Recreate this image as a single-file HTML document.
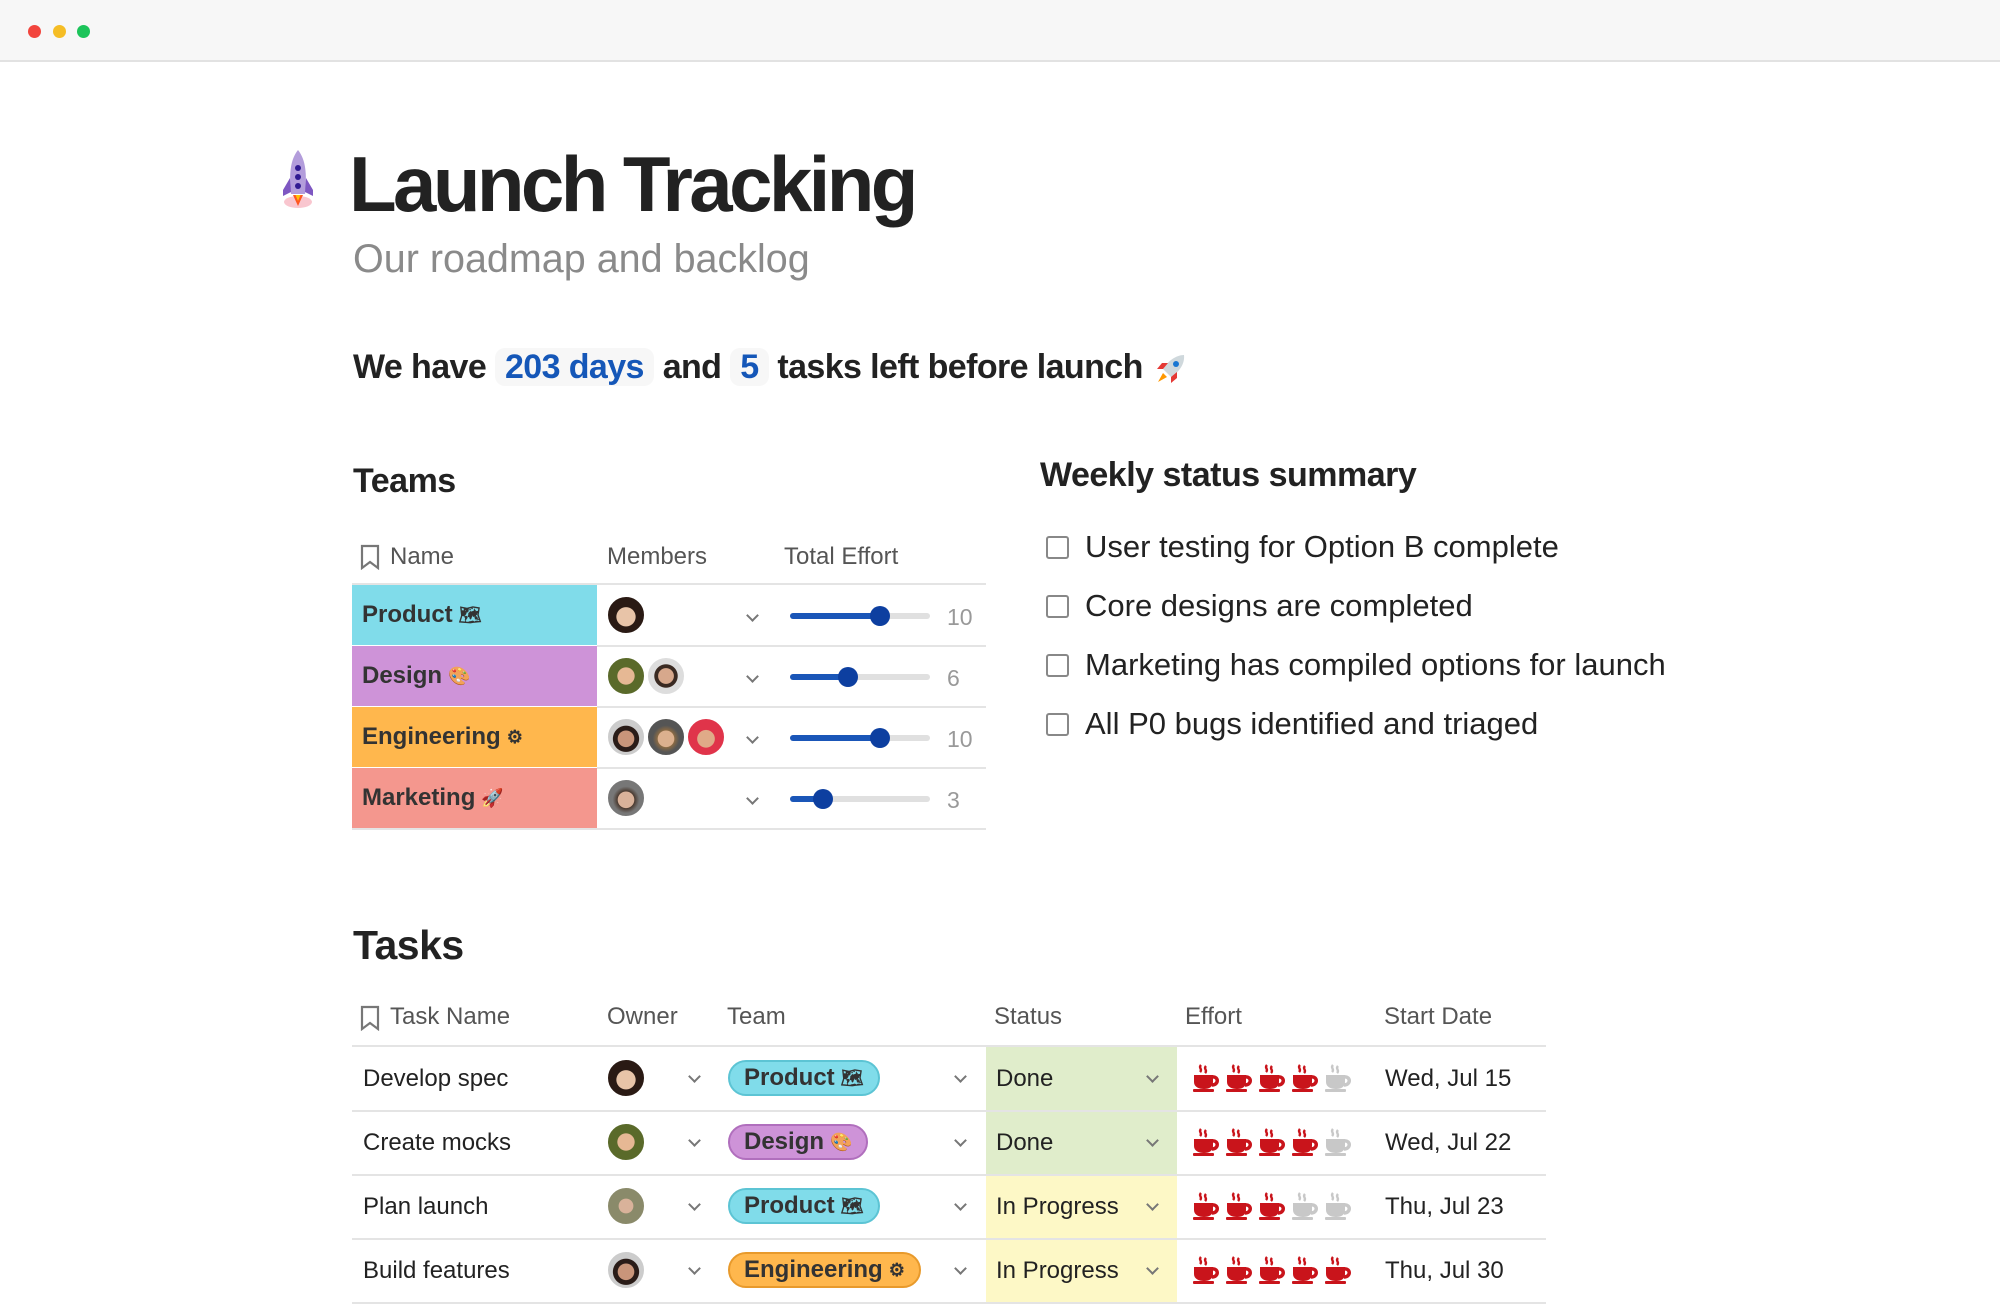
<!DOCTYPE html>
<html><head><meta charset="utf-8"><style>
*{margin:0;padding:0;box-sizing:border-box}
body{width:2000px;height:1304px;overflow:hidden;background:#fff;font-family:"Liberation Sans",sans-serif;color:#222;position:relative}
.a{position:absolute;white-space:nowrap}
.top{position:absolute;left:0;top:0;width:2000px;height:62px;background:#f7f7f7;border-bottom:2px solid #e2e2e2}
.dot{position:absolute;top:25px;width:13px;height:13px;border-radius:50%}
.hdr{font-size:24px;color:#555}
.line{position:absolute;height:2px;background:#e4e4e4}
.cell{position:absolute;font-size:24px;font-weight:bold;color:#333;padding-left:10px;display:flex;align-items:center}
.av{position:absolute;width:40px;height:40px;border-radius:50%;border:2px solid #fff;overflow:hidden}
.chev{position:absolute;width:9px;height:9px;border-right:2px solid #777;border-bottom:2px solid #777;transform:rotate(45deg)}
.track{position:absolute;left:790px;width:140px;height:6px;border-radius:3px;background:#e0e0e0}
.fill{position:absolute;left:0;top:0;height:6px;border-radius:3px;background:#1a56b8}
.thumb{position:absolute;top:-7px;width:20px;height:20px;border-radius:50%;background:#0d3fa0}
.num{position:absolute;left:947px;font-size:23px;color:#999}
.cb{position:absolute;left:1046px;width:23px;height:23px;border:2.5px solid #888;border-radius:3px}
.ck{position:absolute;left:1085px;font-size:31px;color:#222}
.tt{position:absolute;font-size:24px;color:#222}
.pill{position:absolute;height:36px;border-radius:18px;font-size:24px;font-weight:bold;color:#333;padding:0 14px;display:flex;align-items:center}
.st{position:absolute;left:986px;width:191px;height:63px}
</style></head><body>
<div class="top"></div>
<div class="dot" style="left:28px;background:#f2453d"></div>
<div class="dot" style="left:53px;background:#f5bd25"></div>
<div class="dot" style="left:77px;background:#1cc45a"></div>

<svg class="a" style="left:280px;top:150px" width="36" height="60" viewBox="0 0 36 60">
<ellipse cx="18" cy="52" rx="14" ry="6" fill="#f9c6cf"/>
<path d="M18 0 C26 10 27 25 25 44 L11 44 C9 25 10 10 18 0Z" fill="#b39ddb"/>
<path d="M10 28 L3 40 L3 46 L11 42Z M26 28 L33 40 L33 46 L25 42Z" fill="#7e57c2"/>
<circle cx="18" cy="18" r="3" fill="#311b92"/><circle cx="18" cy="27" r="3" fill="#311b92"/><circle cx="18" cy="36" r="3" fill="#311b92"/>
<path d="M13 45 L18 56 L23 45Z" fill="#ff5722"/><path d="M15.5 45 L18 51 L20.5 45Z" fill="#ffc107"/>
</svg>
<div class="a" style="left:349px;top:136px;font-size:78px;font-weight:bold;letter-spacing:-3.6px;color:#222;line-height:96px">Launch Tracking</div>
<div class="a" style="left:353px;top:237px;font-size:39.5px;color:#8a8a8a">Our roadmap and backlog</div>

<div class="a" style="left:353px;top:347px;font-size:34px;font-weight:bold;letter-spacing:-0.6px;color:#222;line-height:40px">We have <span style="background:#f7f7f7;color:#1557b8;border-radius:10px;padding:0 10px">203 days</span> and <span style="background:#f7f7f7;color:#1557b8;border-radius:10px;padding:0 10px">5</span> tasks left before launch</div>
<svg class="a" style="left:1154px;top:352px" width="34" height="34" viewBox="0 0 34 34"><path d="M30 3 C22 3 14 9 9 17 L17 25 C25 20 31 12 30 3Z" fill="#cfd8dc"/><circle cx="22" cy="12" r="3" fill="#1976d2"/><path d="M9 17 L3 17 L8 11 L14 11Z M17 25 L17 31 L23 26 L23 20Z" fill="#e53935"/><path d="M9 21 L4 30 L13 25Z" fill="#ff9800"/></svg>

<div class="a" style="left:353px;top:462px;font-size:34px;font-weight:bold;letter-spacing:-0.5px">Teams</div>
<div class="a" style="left:1040px;top:456px;font-size:34px;font-weight:bold;letter-spacing:-0.5px">Weekly status summary</div>

<svg class="a" style="left:360px;top:544px" width="20" height="26" viewBox="0 0 20 26"><path d="M2 2 H18 V24 L10 18 L2 24Z" fill="none" stroke="#777" stroke-width="2.2"/></svg>
<div class="a hdr" style="left:390px;top:543px">Name</div>
<div class="a hdr" style="left:607px;top:543px">Members</div>
<div class="a hdr" style="left:784px;top:543px">Total Effort</div>
<div class="line" style="left:352px;top:583px;width:634px"></div>

<div class="cell" style="left:352px;top:585px;width:245px;height:60px;background:#80dcea">Product <span style="font-size:18px;margin-left:6px">🗺</span></div>
<div class="cell" style="left:352px;top:646px;width:245px;height:60px;background:#ce93d8">Design <span style="font-size:18px;margin-left:6px">🎨</span></div>
<div class="cell" style="left:352px;top:707px;width:245px;height:60px;background:#ffb74d">Engineering <span style="font-size:18px;margin-left:6px">⚙</span></div>
<div class="cell" style="left:352px;top:768px;width:245px;height:60px;background:#f4978e">Marketing <span style="font-size:18px;margin-left:6px">🚀</span></div>
<div class="line" style="left:597px;top:645px;width:389px"></div>
<div class="line" style="left:597px;top:706px;width:389px"></div>
<div class="line" style="left:597px;top:767px;width:389px"></div>
<div class="line" style="left:352px;top:828px;width:634px"></div>

<div class="av" style="left:606px;top:595px;background:radial-gradient(circle at 50% 55%,#e8c4a8 35%,#2a1a14 37%)"></div>
<div class="av" style="left:606px;top:656px;background:radial-gradient(circle at 50% 50%,#e6b894 33%,#5a6a2a 35%)"></div>
<div class="av" style="left:646px;top:656px;background:radial-gradient(circle at 50% 50%,#d7a88c 30%,#3a2a22 32%,#3a2a22 45%,#ddd 47%)"></div>
<div class="av" style="left:606px;top:717px;background:radial-gradient(circle at 50% 55%,#c9957a 30%,#2a1c18 32%,#2a1c18 48%,#ccc 50%)"></div>
<div class="av" style="left:646px;top:717px;background:radial-gradient(circle at 50% 55%,#dcb08e 30%,#8a6a44 32%,#555 50%)"></div>
<div class="av" style="left:686px;top:717px;background:radial-gradient(circle at 50% 55%,#e0aa88 32%,#e0344a 34%)"></div>
<div class="av" style="left:606px;top:778px;background:radial-gradient(circle at 50% 55%,#d9b29a 30%,#4a3a30 32%,#777 50%)"></div>

<div class="chev" style="left:748px;top:611px"></div>
<div class="chev" style="left:748px;top:672px"></div>
<div class="chev" style="left:748px;top:733px"></div>
<div class="chev" style="left:748px;top:794px"></div>

<div class="track" style="top:613px"><div class="fill" style="width:90px"></div><div class="thumb" style="left:80px"></div></div>
<div class="track" style="top:674px"><div class="fill" style="width:58px"></div><div class="thumb" style="left:48px"></div></div>
<div class="track" style="top:735px"><div class="fill" style="width:90px"></div><div class="thumb" style="left:80px"></div></div>
<div class="track" style="top:796px"><div class="fill" style="width:33px"></div><div class="thumb" style="left:23px"></div></div>
<div class="num" style="top:604px">10</div>
<div class="num" style="top:665px">6</div>
<div class="num" style="top:726px">10</div>
<div class="num" style="top:787px">3</div>

<div class="cb" style="top:536px"></div><div class="ck" style="top:529px">User testing for Option B complete</div>
<div class="cb" style="top:595px"></div><div class="ck" style="top:588px">Core designs are completed</div>
<div class="cb" style="top:654px"></div><div class="ck" style="top:647px">Marketing has compiled options for launch</div>
<div class="cb" style="top:713px"></div><div class="ck" style="top:706px">All P0 bugs identified and triaged</div>

<div class="a" style="left:353px;top:922px;font-size:41px;font-weight:bold;letter-spacing:-0.5px">Tasks</div>
<svg class="a" style="left:360px;top:1005px" width="20" height="26" viewBox="0 0 20 26"><path d="M2 2 H18 V24 L10 18 L2 24Z" fill="none" stroke="#777" stroke-width="2.2"/></svg>
<div class="a hdr" style="left:390px;top:1003px">Task Name</div>
<div class="a hdr" style="left:607px;top:1003px">Owner</div>
<div class="a hdr" style="left:727px;top:1003px">Team</div>
<div class="a hdr" style="left:994px;top:1003px">Status</div>
<div class="a hdr" style="left:1185px;top:1003px">Effort</div>
<div class="a hdr" style="left:1384px;top:1003px">Start Date</div>

<div class="st" style="top:1047px;background:#e0edcb"></div>
<div class="st" style="top:1111px;background:#e0edcb"></div>
<div class="st" style="top:1175px;background:#fdf8c6"></div>
<div class="st" style="top:1239px;background:#fdf8c6"></div>
<div class="line" style="left:352px;top:1045px;width:1194px"></div>
<div class="line" style="left:352px;top:1110px;width:1194px"></div>
<div class="line" style="left:352px;top:1174px;width:1194px"></div>
<div class="line" style="left:352px;top:1238px;width:1194px"></div>
<div class="line" style="left:352px;top:1302px;width:1194px"></div>

<div class="tt" style="left:363px;top:1065px">Develop spec</div>
<div class="tt" style="left:363px;top:1129px">Create mocks</div>
<div class="tt" style="left:363px;top:1193px">Plan launch</div>
<div class="tt" style="left:363px;top:1257px">Build features</div>

<div class="av" style="left:606px;top:1058px;background:radial-gradient(circle at 50% 55%,#e8c4a8 35%,#2a1a14 37%)"></div>
<div class="av" style="left:606px;top:1122px;background:radial-gradient(circle at 50% 50%,#e6b894 33%,#5a6a2a 35%)"></div>
<div class="av" style="left:606px;top:1186px;background:radial-gradient(circle at 50% 50%,#d9b29a 28%,#8a8a6a 30%)"></div>
<div class="av" style="left:606px;top:1250px;background:radial-gradient(circle at 50% 55%,#c9957a 30%,#2a1c18 32%,#2a1c18 48%,#ccc 50%)"></div>

<div class="chev" style="left:690px;top:1072px"></div>
<div class="chev" style="left:690px;top:1136px"></div>
<div class="chev" style="left:690px;top:1200px"></div>
<div class="chev" style="left:690px;top:1264px"></div>
<div class="chev" style="left:956px;top:1072px"></div>
<div class="chev" style="left:956px;top:1136px"></div>
<div class="chev" style="left:956px;top:1200px"></div>
<div class="chev" style="left:956px;top:1264px"></div>
<div class="chev" style="left:1148px;top:1072px"></div>
<div class="chev" style="left:1148px;top:1136px"></div>
<div class="chev" style="left:1148px;top:1200px"></div>
<div class="chev" style="left:1148px;top:1264px"></div>

<div class="pill" style="left:728px;top:1060px;background:#80dcea;border:2px solid #5cc4d4">Product <span style="font-size:18px;margin-left:6px">🗺</span></div>
<div class="pill" style="left:728px;top:1124px;background:#ce93d8;border:2px solid #b06fbd">Design <span style="font-size:18px;margin-left:6px">🎨</span></div>
<div class="pill" style="left:728px;top:1188px;background:#80dcea;border:2px solid #5cc4d4">Product <span style="font-size:18px;margin-left:6px">🗺</span></div>
<div class="pill" style="left:728px;top:1252px;background:#ffb74d;border:2px solid #e89a2c">Engineering <span style="font-size:18px;margin-left:6px">⚙</span></div>

<div class="tt" style="left:996px;top:1065px">Done</div>
<div class="tt" style="left:996px;top:1129px">Done</div>
<div class="tt" style="left:996px;top:1193px">In Progress</div>
<div class="tt" style="left:996px;top:1257px">In Progress</div>

<svg width="0" height="0" style="position:absolute"><defs><g id="cup"><path d="M9 1 C6 4 11 5 8 8 M14 2 C11 5 16 6 13 9" fill="none" stroke="currentColor" stroke-width="2.5"/><path d="M2 11 H21 V18 C21 23 17 25 12 25 C7 25 2 23 2 18Z" fill="currentColor"/><path d="M20 13 C27 12 27 21 20 21" fill="none" stroke="currentColor" stroke-width="3.5"/><rect x="1" y="25" width="21" height="3" rx="1" fill="currentColor"/></g></defs></svg>
<div class="a" style="left:1192px;top:1064px;color:#c9141b"><svg width="165" height="30"><use href="#cup" x="0"/><use href="#cup" x="33"/><use href="#cup" x="66"/><use href="#cup" x="99"/><use href="#cup" x="132" style="color:#c8c8c8"/></svg></div>
<div class="a" style="left:1192px;top:1128px;color:#c9141b"><svg width="165" height="30"><use href="#cup" x="0"/><use href="#cup" x="33"/><use href="#cup" x="66"/><use href="#cup" x="99"/><use href="#cup" x="132" style="color:#c8c8c8"/></svg></div>
<div class="a" style="left:1192px;top:1192px;color:#c9141b"><svg width="165" height="30"><use href="#cup" x="0"/><use href="#cup" x="33"/><use href="#cup" x="66"/><use href="#cup" x="99" style="color:#c8c8c8"/><use href="#cup" x="132" style="color:#c8c8c8"/></svg></div>
<div class="a" style="left:1192px;top:1256px;color:#c9141b"><svg width="165" height="30"><use href="#cup" x="0"/><use href="#cup" x="33"/><use href="#cup" x="66"/><use href="#cup" x="99"/><use href="#cup" x="132"/></svg></div>

<div class="tt" style="left:1385px;top:1065px">Wed, Jul 15</div>
<div class="tt" style="left:1385px;top:1129px">Wed, Jul 22</div>
<div class="tt" style="left:1385px;top:1193px">Thu, Jul 23</div>
<div class="tt" style="left:1385px;top:1257px">Thu, Jul 30</div>
</body></html>
